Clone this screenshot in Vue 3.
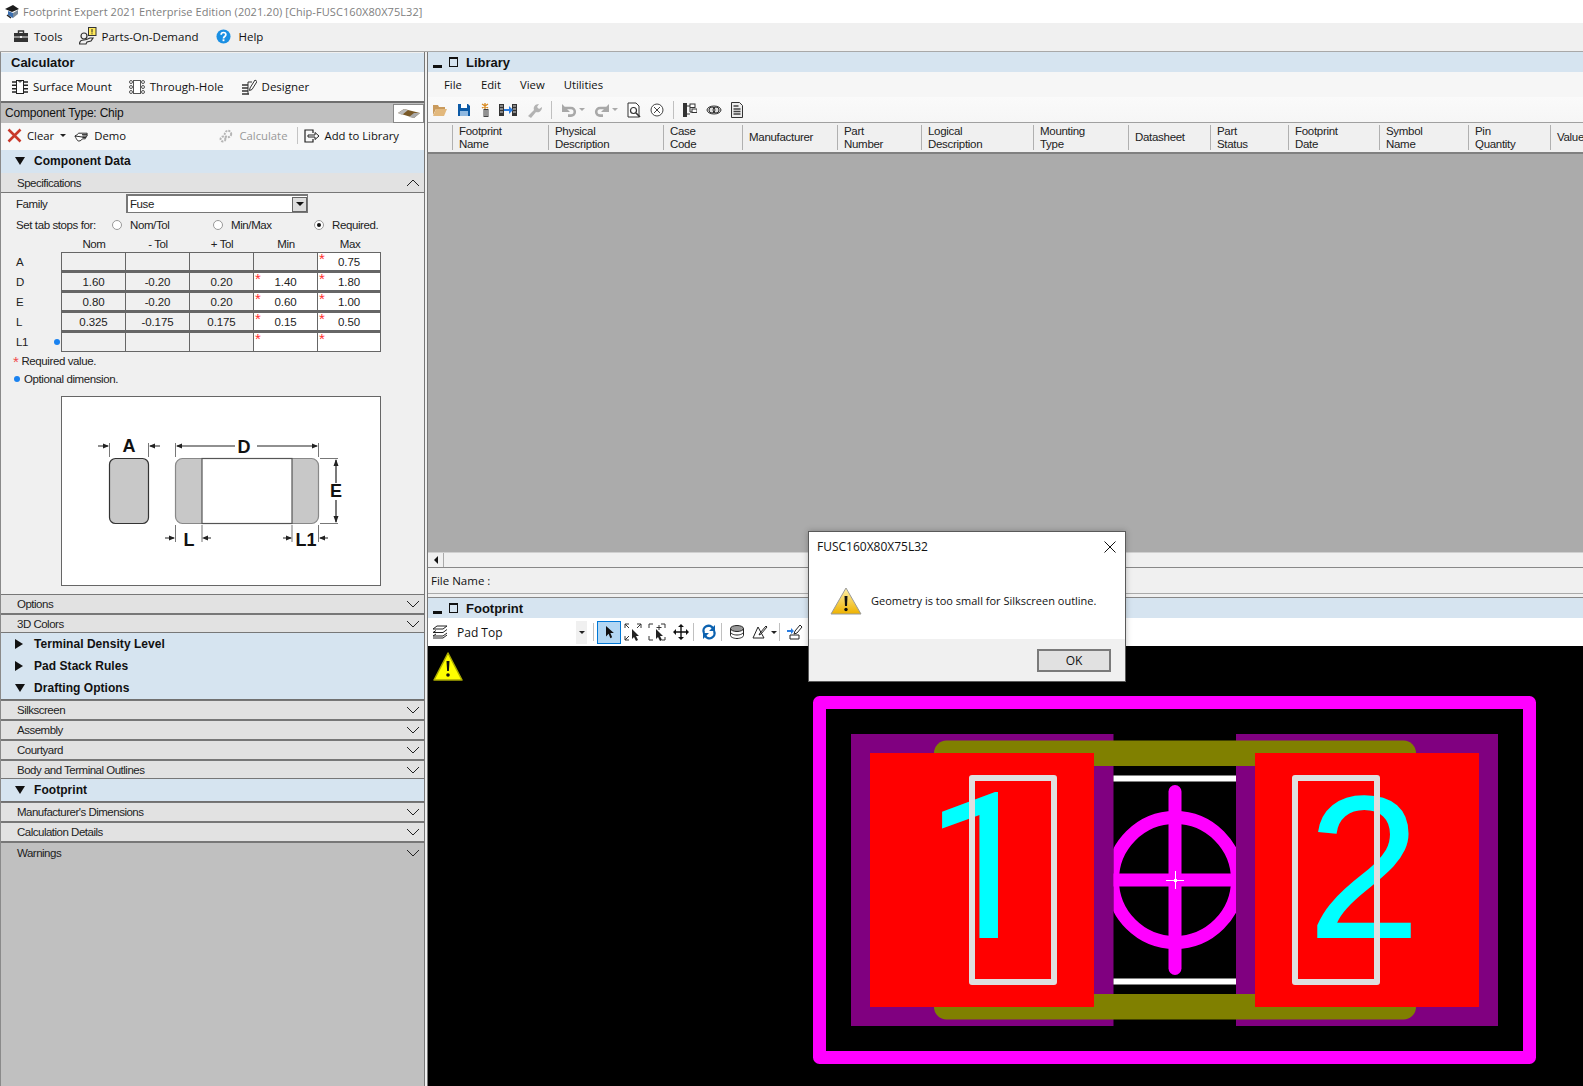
<script setup>
const menu = [
  { icon: 'tools', label: 'Tools' },
  { icon: 'pod', label: 'Parts-On-Demand' },
  { icon: 'help', label: 'Help' }
]
const dims = [
  { n: 'A', cells: ['', '', '', '', '0.75'], req: [false, true] },
  { n: 'D', cells: ['1.60', '-0.20', '0.20', '1.40', '1.80'], req: [true, true] },
  { n: 'E', cells: ['0.80', '-0.20', '0.20', '0.60', '1.00'], req: [true, true] },
  { n: 'L', cells: ['0.325', '-0.175', '0.175', '0.15', '0.50'], req: [true, true] },
  { n: 'L1', cells: ['', '', '', '', ''], req: [true, true], opt: true }
]
const heads = ['Nom', '- Tol', '+ Tol', 'Min', 'Max']
const cols = [
  { t: ['Footprint', 'Name'], w: 96 },
  { t: ['Physical', 'Description'], w: 115 },
  { t: ['Case', 'Code'], w: 79 },
  { t: ['Manufacturer'], w: 95 },
  { t: ['Part', 'Number'], w: 84 },
  { t: ['Logical', 'Description'], w: 112 },
  { t: ['Mounting', 'Type'], w: 95 },
  { t: ['Datasheet'], w: 82 },
  { t: ['Part', 'Status'], w: 78 },
  { t: ['Footprint', 'Date'], w: 91 },
  { t: ['Symbol', 'Name'], w: 89 },
  { t: ['Pin', 'Quantity'], w: 82 },
  { t: ['Value'], w: 33 }
]
</script>

<template>
  <div class="app">
    <header class="title">
      <svg class="logo" viewBox="0 0 18 16" width="18" height="16"><path d="M1 5 L9 1 L15 5 L8 8Z" fill="#1c1c1c"/><path d="M4 7 L9 9 L9 14 L4 11Z" fill="#3b6fb0"/><path d="M9 9 L14 6 L14 10 L9 14Z" fill="#7a8a9a"/><path d="M3 11 L7 14" stroke="#222" stroke-width="1.5"/></svg>
      <span>Footprint Expert 2021 Enterprise Edition (2021.20) [Chip-FUSC160X80X75L32]</span>
    </header>
    <nav class="menubar">
      <div v-for="m in menu" :key="m.label" class="menuitem">
        <svg v-if="m.icon === 'tools'" viewBox="0 0 14 12" width="14" height="12"><path d="M0 3h14v9H0z" fill="#333"/><path d="M4.500 3V1h5v2" fill="none" stroke="#333" stroke-width="1.400"/><path d="M0 7h14" stroke="#f0f0f0"/><path d="M6 6h2v2H6z" fill="#f0f0f0"/></svg>
        <svg v-else-if="m.icon === 'pod'" viewBox="0 0 18 18" width="18" height="18"><rect x="9.500" y=".5" width="7.500" height="8" fill="#ffe95c" stroke="#333"/><path d="M13 2v3.500M13 6.300v1" stroke="#222"/><circle cx="5" cy="9" r="3" fill="none" stroke="#333" stroke-width="1.200"/><path d="M.5 17c0-3 2-4 4.500-4 2 0 4-1 6-2l3 0-2 3-4 1-1 2z" fill="none" stroke="#333" stroke-width="1.200"/></svg>
        <svg v-else viewBox="0 0 16 16" width="15" height="15"><circle cx="8" cy="8" r="7.500" fill="#1a8fe3"/><path d="M5.500 6c0-3 5-3 5 0 0 2-2.500 2-2.500 4" fill="none" stroke="#fff" stroke-width="1.800"/><rect x="7" y="11" width="2" height="2" fill="#fff"/></svg>
        <span>{{ m.label }}</span>
      </div>
    </nav>

    <main class="workspace">
      <aside class="side">
        <div class="calc-head">Calculator</div>
        <div class="modes">
          <div class="mode">
            <svg viewBox="0 0 16 16" width="16" height="16"><rect x="4.500" y="1.500" width="7" height="13" fill="#fff" stroke="#222"/><path d="M0 3h4M0 6.300h4M0 9.700h4M0 13h4M12 3h4M12 6.300h4M12 9.700h4M12 13h4" stroke="#222" stroke-width="1.500"/><path d="M6.500 1.500a1.500 1.500 0 0 0 3 0" fill="none" stroke="#222"/></svg>
            <span>Surface Mount</span>
          </div>
          <div class="mode">
            <svg viewBox="0 0 16 16" width="16" height="16"><rect x="4.500" y="1.500" width="7" height="13" fill="#fff" stroke="#555"/><g fill="none" stroke="#555"><circle cx="2" cy="3" r="1.500"/><circle cx="2" cy="8" r="1.500"/><circle cx="2" cy="13" r="1.500"/><circle cx="14" cy="3" r="1.500"/><circle cx="14" cy="8" r="1.500"/><circle cx="14" cy="13" r="1.500"/></g></svg>
            <span>Through-Hole</span>
          </div>
          <div class="mode">
            <svg viewBox="0 0 16 16" width="16" height="16"><path d="M1 6h6M1 9h6M1 12h6M1 15h7" stroke="#333" stroke-width="1.300"/><path d="M7 3h4M7 3v12" stroke="#333" fill="none"/><path d="M9 9l5-8 2 1.500-5 8-2.500 1z" fill="#fff" stroke="#333"/></svg>
            <span>Designer</span>
          </div>
        </div>
        <div class="ctype">
          <span>Component Type: Chip</span>
          <div class="chip-btn">
            <svg viewBox="0 0 24 12" width="24" height="12"><path d="M1 6l6-4 16 4-6 5z" fill="#7a5a28"/><path d="M1 6l6-4 4 1-6 5z" fill="#bbb"/><path d="M17 6l6 0-6 5-5-1z" fill="#aaa"/></svg>
          </div>
        </div>
        <div class="actions">
          <div class="act">
            <svg viewBox="0 0 15 15" width="15" height="15"><path d="M1.500 1.500l12 12M13.500 1.500l-12 12" stroke="#c9392b" stroke-width="2.600"/></svg>
            <span>Clear</span><i class="caret"></i>
          </div>
          <div class="act demo">
            <svg viewBox="0 0 16 14" width="15" height="14"><path d="M1 7c2-1 3-2 4-3l9 0v1.500H8.500M14 5.500v1.500H9M13 7v1.500H9M12 8.500V10H9c-1 2-4 3-5 2-1-1-2-3-3-5z" fill="#fff" stroke="#222"/></svg>
            <span>Demo</span>
          </div>
          <div class="act calc">
            <svg viewBox="0 0 14 14" width="14" height="14"><circle cx="9" cy="5" r="3.200" fill="none" stroke="#b5b5b5" stroke-width="2" stroke-dasharray="2 1"/><circle cx="4" cy="10" r="2.400" fill="none" stroke="#b5b5b5" stroke-width="2" stroke-dasharray="2 1"/></svg>
            <span>Calculate</span>
          </div>
          <div class="act add">
            <svg viewBox="0 0 16 14" width="16" height="14"><path d="M9 4V1H1v12h8v-3" fill="none" stroke="#222" stroke-width="1.200"/><path d="M4 6h7V3.500L15 7l-4 3.500V8H4z" fill="#fff" stroke="#222"/></svg>
            <span>Add to Library</span>
          </div>
        </div>
        <div class="blue-row big"><i class="tri tri-d"></i><b>Component Data</b></div>
        <div class="sec open">
          <span>Specifications</span>
          <svg class="chev" viewBox="0 0 14 8" width="14" height="8"><path d="M1 7l6-6 6 6" fill="none" stroke="#222"/></svg>
        </div>
        <section class="spec">
          <div class="family">
            <label>Family</label>
            <div class="combo"><span>Fuse</span><div class="combo-btn"><i class="tri tri-d small"></i></div></div>
          </div>
          <div class="stops">
            <span class="stops-lbl">Set tab stops for:</span>
            <span class="radio-w r1"><i class="radio"></i>Nom/Tol</span>
            <span class="radio-w r2"><i class="radio"></i>Min/Max</span>
            <span class="radio-w"><i class="radio on"></i>Required.</span>
          </div>
          <div class="grid-heads">
            <span v-for="h in heads" :key="h">{{ h }}</span>
          </div>
          <div class="dims">
            <div v-for="d in dims" :key="d.n" class="dim-row">
              <span class="dim-name">{{ d.n }}<i v-if="d.opt" class="dot"></i></span>
              <div v-for="(c, i) in d.cells" :key="i" class="cell" :class="{ ro: i < 3 || (i === 3 && !d.req[0]) }">
                <em v-if="i === 3 && d.req[0]">*</em>
                <em v-if="i === 4 && d.req[1]">*</em>
                {{ c }}
              </div>
            </div>
          </div>
          <div class="legend"><em>*</em>Required value.</div>
          <div class="legend second"><i class="dot"></i>Optional dimension.</div>
          <div class="diagram">
            <svg viewBox="0 0 318 188" width="318" height="188">
              <rect x="47.500" y="61.500" width="39" height="65" rx="6" fill="#c8c8c8" stroke="#333" stroke-width="1.200"/>
              <rect x="113.500" y="61.500" width="143" height="65" rx="7" fill="#c8c8c8" stroke="#888" stroke-width="1.200"/>
              <rect x="140" y="61.500" width="90" height="65" fill="#fff" stroke="#555" stroke-width="1.200"/>
              <g stroke="#777" fill="none">
                <path d="M47.500 46v14M86.500 46v14M113.500 46v14M256.500 46v14M258 61.500h18M258 126.500h18M113.500 128v17M140 128v17M230 128v17M256.500 128v17"/>
              </g>
              <g stroke="#222" stroke-width="1.200" fill="#222">
                <path d="M36 49h10M88 49h10M115 49h58M195 49h60M274 63v23M274 103v22M103 141h9M142 141h7M221 141h8M258 141h8"/>
              </g>
              <g fill="#222">
                <path d="M47 49l-6-2.500v5zM87 49l6-2.500v5zM114 49l6-2.500v5zM256 49l-6-2.500v5zM274 62l-2.500 7h5zM274 126l-2.500-7h5zM113 141l-6-2.500v5zM140 141l6-2.500v5zM230 141l-6-2.500v5zM257 141l6-2.500v5z"/>
              </g>
              <text x="67" y="55" class="dlabel">A</text>
              <text x="182" y="56" class="dlabel">D</text>
              <text x="274" y="100" class="dlabel">E</text>
              <text x="127" y="149" class="dlabel">L</text>
              <text x="244" y="149" class="dlabel">L1</text>
            </svg>
          </div>
        </section>
        <div class="sec">Options<svg class="chev" viewBox="0 0 14 8" width="14" height="8"><path d="M1 1l6 6 6-6" fill="none" stroke="#222"/></svg></div>
        <div class="sec short">3D Colors<svg class="chev" viewBox="0 0 14 8" width="14" height="8"><path d="M1 1l6 6 6-6" fill="none" stroke="#222"/></svg></div>
        <div class="blue-group">
          <div class="blue-row"><i class="tri tri-r"></i><b>Terminal Density Level</b></div>
          <div class="blue-row"><i class="tri tri-r"></i><b>Pad Stack Rules</b></div>
          <div class="blue-row"><i class="tri tri-d"></i><b>Drafting Options</b></div>
        </div>
        <div class="sec">Silkscreen<svg class="chev" viewBox="0 0 14 8" width="14" height="8"><path d="M1 1l6 6 6-6" fill="none" stroke="#222"/></svg></div>
        <div class="sec">Assembly<svg class="chev" viewBox="0 0 14 8" width="14" height="8"><path d="M1 1l6 6 6-6" fill="none" stroke="#222"/></svg></div>
        <div class="sec">Courtyard<svg class="chev" viewBox="0 0 14 8" width="14" height="8"><path d="M1 1l6 6 6-6" fill="none" stroke="#222"/></svg></div>
        <div class="sec short">Body and Terminal Outlines<svg class="chev" viewBox="0 0 14 8" width="14" height="8"><path d="M1 1l6 6 6-6" fill="none" stroke="#222"/></svg></div>
        <div class="blue-group"><div class="blue-row"><i class="tri tri-d"></i><b>Footprint</b></div></div>
        <div class="sec">Manufacturer's Dimensions<svg class="chev" viewBox="0 0 14 8" width="14" height="8"><path d="M1 1l6 6 6-6" fill="none" stroke="#222"/></svg></div>
        <div class="sec">Calculation Details<svg class="chev" viewBox="0 0 14 8" width="14" height="8"><path d="M1 1l6 6 6-6" fill="none" stroke="#222"/></svg></div>
        <div class="sec warn">Warnings<svg class="chev" viewBox="0 0 14 8" width="14" height="8"><path d="M1 1l6 6 6-6" fill="none" stroke="#222"/></svg></div>
        <div class="side-fill"></div>
      </aside>

      <div class="main">
        <div class="panel-head"><i class="minus"></i><i class="win"></i><b>Library</b></div>
        <div class="lib-menu"><span>File</span><span>Edit</span><span>View</span><span>Utilities</span></div>
        <div class="lib-tools">
          <svg viewBox="0 0 16 14" width="16" height="14"><path d="M1 2h5l1 2h6v2H4L1 12z" fill="#c99a5c"/><path d="M4 6h11l-3 7H1z" fill="#e2b87c"/></svg>
          <svg viewBox="0 0 14 14" width="14" height="14"><path d="M1 1h10l2 2v10H1z" fill="#0c5aa6"/><rect x="4" y="1" width="6" height="4" fill="#fff"/><rect x="3" y="8" width="8" height="5" fill="#8fb8e0"/></svg>
          <svg viewBox="0 0 10 14" width="10" height="14"><path d="M5 0v6M2 1l6 4M8 1L2 5" stroke="#d9881c" stroke-width="1.300"/><rect x="3.500" y="6" width="5" height="8" fill="#444"/><path d="M4 8h4M4 10h4M4 12h4" stroke="#ddd"/></svg>
          <svg viewBox="0 0 18 14" width="18" height="14"><rect x="0" y="1" width="5" height="12" fill="#333"/><rect x="13" y="1" width="5" height="12" fill="#333"/><path d="M1 3h3M1 6h3M1 9h3M14 3h3M14 6h3M14 9h3" stroke="#ddd"/><path d="M5 6h5V3l4 4-4 4V8H5z" fill="#2a7de1"/></svg>
          <svg viewBox="0 0 16 16" width="16" height="16"><path d="M2 14l6-6c-1-3 1-6 5-6l-2 3 2 2 3-2c0 4-3 6-6 5l-5 6z" fill="#b3b3b3"/></svg>
          <span class="sep"></span>
          <span class="drop">
            <svg viewBox="0 0 16 16" width="16" height="16"><path d="M4 6h6a3.800 3.800 0 0 1 0 7.600H7" fill="none" stroke="#a8a8a8" stroke-width="2.600"/><path d="M1 2v8h8z" fill="#a8a8a8"/></svg><i class="caret grey"></i>
          </span>
          <span class="drop">
            <svg viewBox="0 0 16 16" width="16" height="16"><path d="M12 6H6a3.800 3.800 0 0 0 0 7.600h3" fill="none" stroke="#a8a8a8" stroke-width="2.600"/><path d="M15 2v8H7z" fill="#a8a8a8"/></svg><i class="caret grey"></i>
          </span>
          <svg viewBox="0 0 14 16" width="14" height="16"><path d="M1 1h8l3 3v11H1z" fill="#fff" stroke="#333"/><circle cx="6.500" cy="8.500" r="3" fill="none" stroke="#333" stroke-width="1.200"/><path d="M9 11l4 4" stroke="#333" stroke-width="1.600"/></svg>
          <svg viewBox="0 0 14 14" width="14" height="14"><circle cx="7" cy="7" r="6" fill="#fff" stroke="#444"/><path d="M4 4l6 6M10 4l-6 6" stroke="#444"/></svg>
          <span class="sep"></span>
          <svg viewBox="0 0 14 14" width="14" height="14"><rect x="0" y="0" width="4" height="14" fill="#333"/><path d="M4 3h3M4 11h3M7 5v4h3" stroke="#333" fill="none"/><rect x="7" y="1" width="5" height="3.500" fill="#fff" stroke="#333"/><rect x="9" y="6" width="5" height="3.500" fill="#fff" stroke="#333"/></svg>
          <svg viewBox="0 0 16 10" width="16" height="10"><ellipse cx="8" cy="5" rx="7" ry="4" fill="#ddd" stroke="#333"/><circle cx="6" cy="5" r="3" fill="none" stroke="#333"/><circle cx="10" cy="5" r="3" fill="none" stroke="#333"/></svg>
          <svg viewBox="0 0 12 16" width="12" height="16"><path d="M.5.500h8l3 3v12H.500z" fill="#eee" stroke="#333"/><path d="M2.500 4h5M2.500 7h7M2.500 9.500h7M2.500 12h7" stroke="#444" stroke-width="1.300"/></svg>
        </div>
        <div class="lib-head">
          <div class="rowhead"></div>
          <div v-for="c in cols" :key="c.t[0] + c.w" class="lib-col" :style="{ width: c.w + 'px' }">
            <span v-for="t in c.t" :key="t">{{ t }}</span>
          </div>
        </div>
        <div class="lib-body"></div>
        <div class="hscroll"><div class="sb-btn"><i class="tri tri-l"></i></div></div>
        <div class="filename">File Name :</div>
        <div class="panel-head fp-head"><i class="minus"></i><i class="win"></i><b>Footprint</b></div>
        <div class="fp-tools">
          <svg class="layers" viewBox="0 0 16 14" width="16" height="14"><path d="M1 4l4-3h10l-4 3zM1 7.500l3-2M1 11l3-2M1 7.500h10l4-3M1 11h10l4-3M1 13h10l4-3" fill="none" stroke="#222"/></svg>
          <div class="layer-combo"><span>Pad Top</span><div class="lc-btn"><i class="caret"></i></div></div>
          <span class="sep"></span>
          <div class="tool on"><svg viewBox="0 0 12 16" width="11" height="14"><path d="M2 1v12l3-3 2 5 2-1-2-5h4z" fill="#111"/></svg></div>
          <div class="tool"><svg viewBox="0 0 18 18" width="18" height="18"><path d="M1 5V1h4M13 1h4v4M1 13v4h4" fill="none" stroke="#333"/><path d="M1 1l4 4M17 1l-4 4M1 17l4-4" stroke="#333"/><path d="M8 6v10l2-2 2 4 2-1-2-4h3z" fill="#222"/></svg></div>
          <div class="tool"><svg viewBox="0 0 18 18" width="18" height="18"><path d="M5 1H1v4M13 1h4v4M1 13v4h4M14 17h3v-3" fill="none" stroke="#333"/><path d="M11 2v5M8.500 4.500h5" stroke="#333"/><path d="M8 6v10l2-2 2 4 2-1-2-4h3z" fill="#222"/></svg></div>
          <div class="tool"><svg viewBox="0 0 16 16" width="16" height="16"><path d="M8 1v14M1 8h14" stroke="#111" stroke-width="1.400"/><path d="M8 0l-3 3h6zM8 16l-3-3h6zM0 8l3-3v6zM16 8l-3-3v6z" fill="#111"/></svg></div>
          <span class="sep"></span>
          <div class="tool"><svg viewBox="0 0 16 16" width="16" height="16"><path d="M3 9A5 5 0 0 1 12 4.500M13 7a5 5 0 0 1-9 4.500" fill="none" stroke="#0c62b0" stroke-width="2.400"/><path d="M14 1v6H8zM2 15V9h6z" fill="#0c62b0"/></svg></div>
          <span class="sep"></span>
          <div class="tool"><svg viewBox="0 0 16 14" width="16" height="14"><ellipse cx="8" cy="3.500" rx="6.500" ry="3" fill="#999" stroke="#222"/><path d="M1.500 3.500v7c0 1.500 3 3 6.500 3s6.500-1.500 6.500-3v-7M1.500 7c0 1.500 3 3 6.500 3s6.500-1.500 6.500-3" fill="none" stroke="#222"/></svg></div>
          <div class="tool wide"><svg viewBox="0 0 16 14" width="16" height="14"><path d="M1 13L6 2l6 11zM8 8l6-7 1 1-6 7-2 1z" fill="#fff" stroke="#222"/></svg><i class="caret"></i></div>
          <span class="sep"></span>
          <div class="tool"><svg viewBox="0 0 16 16" width="16" height="16"><path d="M0 6h4V4l3 3-3 3V8H0z" fill="#2a7de1"/><path d="M8 7l5-6 2 2-5 6-3 1zM3 11h9v4H3z" fill="#fff" stroke="#222"/></svg></div>
        </div>
        <div class="canvas">
          <svg class="warn-mark" viewBox="0 0 30 30" width="30" height="30"><path d="M15 2L29 29H1z" fill="#ffff00" stroke="#a9a900" stroke-width="1.500" stroke-linejoin="round"/><path d="M13.500 10h3l-.6 10h-1.800z" fill="#111"/><circle cx="15" cy="24" r="1.800" fill="#111"/></svg>
          <svg class="board" viewBox="428 645 1155 441" width="1155" height="441">
            <rect x="851" y="733" width="262.500" height="292" fill="#800080"/>
            <rect x="1236" y="733" width="262" height="292" fill="#800080"/>
            <clipPath id="mid"><rect x="1113.500" y="690" width="122.500" height="380"/></clipPath>
            <g clip-path="url(#mid)">
              <circle cx="1175" cy="879" r="62.500" fill="none" stroke="#ff00ff" stroke-width="13"/>
            </g>
            <rect x="1113.500" y="872.500" width="122.500" height="13" fill="#ff00ff"/>
            <rect x="1168.500" y="784" width="13" height="190" rx="6.500" fill="#ff00ff"/>
            <rect x="1113.500" y="774.500" width="122.500" height="6" fill="#fff"/>
            <rect x="1113.500" y="977.500" width="122.500" height="6" fill="#fff"/>
            <path d="M934 765v-13a12.500 12.500 0 0 1 12.500-12.500h457a12.500 12.500 0 0 1 12.500 12.500v13z" fill="#808000"/>
            <path d="M934 993v13a12.500 12.500 0 0 0 12.500 12.500h457a12.500 12.500 0 0 0 12.500-12.500v-13z" fill="#808000"/>
            <rect x="870" y="752" width="224" height="254" fill="#ff0000"/>
            <rect x="1255" y="752" width="224" height="254" fill="#ff0000"/>
            <rect x="819.500" y="701.500" width="710" height="355" fill="none" stroke="#ff00ff" stroke-width="13" stroke-linejoin="round"/>
            <text x="925" y="937" class="pin one">1</text>
            <text x="1307" y="937" class="pin two">2</text>
            <rect x="972" y="777" width="82" height="204" fill="none" stroke="#dfdfdf" stroke-width="6" stroke-linejoin="round"/>
            <rect x="1295" y="777" width="82" height="204" fill="none" stroke="#dfdfdf" stroke-width="6" stroke-linejoin="round"/>
            <path d="M1166 879.500h18M1175.500 870v18" stroke="#fff"/>
            <rect x="1174" y="878" width="3" height="3" fill="#fff"/>
          </svg>
        </div>
      </div>
    </main>

    <div class="dialog">
      <div class="dlg-title">
        <span>FUSC160X80X75L32</span>
        <svg viewBox="0 0 12 12" width="12" height="12"><path d="M.5.500l11 11M11.500.500l-11 11" stroke="#111" stroke-width="1"/></svg>
      </div>
      <div class="dlg-body">
        <svg viewBox="0 0 32 28" width="32" height="28"><defs><linearGradient id="w" x1="0" y1="0" x2="0" y2="1"><stop offset="0" stop-color="#fff0a8"/><stop offset="1" stop-color="#eeb200"/></linearGradient></defs><path d="M16 1L31 27H1z" fill="url(#w)" stroke="#9a9a9a" stroke-linejoin="round"/><path d="M14.500 9h3l-.5 10h-2z" fill="#111"/><circle cx="16" cy="22.500" r="1.700" fill="#111"/></svg>
        <span>Geometry is too small for Silkscreen outline.</span>
      </div>
      <div class="dlg-foot"><button class="ok">OK</button></div>
    </div>
  </div>
</template>

<style>
html, body { margin: 0; padding: 0; background: #f0f0f0; overflow: hidden; }
</style>

<style scoped>
.app { width: 1583px; height: 1086px; position: relative; overflow: hidden; display: flex; flex-direction: column; font-family: "Liberation Sans", Arial, sans-serif; font-size: 12px; color: #111; background: #f0f0f0; }
.title { height: 23px; flex: none; background: #fff; display: flex; align-items: center; gap: 1px; padding-left: 4px; font-family: "Open Sans", sans-serif; font-size: 11px; letter-spacing: .07px; color: #808080; white-space: nowrap; }
.logo { flex: none; }
.menubar { height: 28px; flex: none; box-sizing: border-box; padding: 0 0 2px 14px; display: flex; align-items: center; background: #f0f0f0; font-family: "Open Sans", sans-serif; font-size: 11.500px; color: #111; }
.menuitem { display: flex; align-items: center; gap: 6px; margin-right: 16px; }
.menuitem:nth-child(2) { gap: 5px; margin-right: 18px; }
.menuitem:nth-child(3) { gap: 7px; }

.workspace { flex: 1; min-height: 0; display: flex; border-top: 1px solid #a8a8a8; }
.side { width: 425px; flex: none; box-sizing: border-box; display: flex; flex-direction: column; border-left: 1px solid #8a8a8a; border-right: 1px solid #777; background: #f0f0f0; }
.calc-head { height: 19px; margin-top: 1px; background: #d6e4f0; font-weight: bold; font-size: 13px; line-height: 19px; padding-left: 10px; color: #111; flex: none; }
.modes { height: 29px; flex: none; display: flex; align-items: center; background: #f8f8f8; padding-left: 11px; font-family: "Open Sans", sans-serif; font-size: 11.500px; }
.mode { display: flex; align-items: center; gap: 5px; margin-right: 17px; }
.ctype { height: 22px; flex: none; background: #c0c0c0; border-top: 2px solid #6e6e6e; display: flex; align-items: center; justify-content: space-between; padding-left: 4px; box-sizing: border-box; letter-spacing: -.2px; }
.chip-btn { width: 31px; height: 19px; background: #fff; border: 1px solid #888; box-sizing: border-box; display: flex; align-items: center; justify-content: center; }
.actions { height: 27px; flex: none; box-sizing: border-box; padding: 0 0 2px 6px; display: flex; align-items: center; background: #f8f8f8; font-family: "Open Sans", sans-serif; font-size: 11.300px; }
.act { display: flex; align-items: center; gap: 5px; }
.act.demo { margin-left: 8px; }
.act.calc { margin-left: auto; color: #999; gap: 6px; }
.act.add { margin-left: 9px; margin-right: 25px; padding-left: 6px; border-left: 1px solid #c4c4c4; height: 17px; }
.caret { display: inline-block; width: 0; height: 0; border-left: 3px solid transparent; border-right: 3px solid transparent; border-top: 3px solid #222; }
.caret.grey { border-top-color: #aaa; margin-left: 2px; }
.act .caret { margin-left: 1px; }
.tri { display: inline-block; width: 0; height: 0; flex: none; }
.tri-d { border-left: 5px solid transparent; border-right: 5px solid transparent; border-top: 8px solid #111; }
.tri-d.small { border-left-width: 4px; border-right-width: 4px; border-top-width: 4px; }
.tri-r { border-top: 5px solid transparent; border-bottom: 5px solid transparent; border-left: 8px solid #111; }
.tri-l { border-top: 4px solid transparent; border-bottom: 4px solid transparent; border-right: 4px solid #111; }
.blue-row { display: flex; align-items: center; height: 22px; flex: none; box-sizing: border-box; background: #d6e4f0; padding-left: 14px; gap: 9px; font-size: 12px; }
.blue-row b { color: #111; letter-spacing: .05px; }
.blue-row:has(.tri-r) { gap: 11px; }
.blue-row.big { height: 23px; padding-bottom: 2px; }
.blue-group { flex: none; background: #d6e4f0; border-bottom: 1px solid #707070; }
.sec { height: 20px; flex: none; box-sizing: border-box; display: flex; align-items: center; justify-content: space-between; padding: 0 3px 0 16px; background: #e2e2e2; border-top: 1px solid #777; border-bottom: 1px solid #777; font-size: 11.500px; letter-spacing: -.5px; color: #222; }
.sec.short { height: 19px; }
.sec.open { border-top: 0; }
.sec.warn { background: #c0c0c0; border-bottom: 0; }
.chev { margin-right: 1px; flex: none; }
.side-fill { flex: 1; background: #c0c0c0; }

.spec { height: 401px; flex: none; box-sizing: border-box; background: #f0f0f0; padding-left: 15px; font-size: 11.500px; letter-spacing: -.4px; color: #222; }
.family { display: flex; align-items: center; height: 21px; }
.family label { width: 110px; }
.combo { width: 182px; height: 19px; background: #fff; border: 1px solid #777; border-width: 2px 1px 1px 2px; box-sizing: border-box; display: flex; align-items: center; justify-content: space-between; padding-left: 2px; }
.combo-btn { width: 15px; height: 15px; background: #ddd; border: 1px solid #666; box-sizing: border-box; display: flex; align-items: center; justify-content: center; }
.stops { display: flex; align-items: center; height: 21px; }
.stops-lbl { width: 96px; }
.radio-w { display: inline-flex; align-items: center; gap: 8px; }
.r1, .r2 { width: 101px; }
.radio { width: 10px; height: 10px; border-radius: 50%; border: 1px solid #999; background: #fff; box-sizing: border-box; position: relative; display: inline-block; }
.radio.on::after { content: ""; position: absolute; left: 2px; top: 2px; width: 4px; height: 4px; border-radius: 50%; background: #111; }
.grid-heads { display: flex; padding-left: 46px; height: 17px; align-items: center; }
.grid-heads span { width: 64px; text-align: center; }
.dims { display: flex; flex-direction: column; }
.dim-row { display: flex; height: 20px; }
.dim-name { width: 45px; line-height: 20px; position: relative; }
.dim-name .dot { position: absolute; left: 38px; top: 7px; }
.dot { display: inline-block; width: 6px; height: 6px; border-radius: 50%; background: #1a82f0; }
.cell { width: 64px; height: 20px; box-sizing: border-box; border: 1px solid #666; border-bottom-width: 2px; border-right-width: 0; background: #fff; text-align: center; line-height: 18px; position: relative; color: #222; letter-spacing: -.1px; }
.cell:last-child { border-right-width: 1px; }
.dim-row:last-child .cell { border-bottom-width: 1px; }
.cell.ro { background: #f0f0f0; }
.cell em { position: absolute; left: 1px; top: -1px; color: #ff3030; font-style: normal; font-size: 15px; line-height: 14px; }
.legend { height: 18px; line-height: 18px; margin-left: -3px; }
.legend em { color: #f04848; font-style: normal; font-size: 15px; margin-right: 3px; vertical-align: -2px; }
.legend .dot { margin: 0 4px 1px 1px; }
.diagram { margin: 8px 0 0 45px; width: 320px; height: 190px; box-sizing: border-box; background: #fff; border: 1px solid #666; }
.diagram svg { display: block; }
.dlabel { font-family: "Liberation Sans", sans-serif; font-weight: bold; font-size: 18px; text-anchor: middle; fill: #111; letter-spacing: 0; }

.main { flex: 1; min-width: 0; display: flex; flex-direction: column; margin-left: 2px; border-left: 1px solid #777; }
.panel-head { height: 20px; flex: none; background: #d6e4f0; display: flex; align-items: center; padding-left: 5px; font-size: 13px; }
.panel-head b { margin-left: 7px; }
.minus { width: 9px; height: 3px; background: #111; align-self: flex-end; margin-bottom: 4px; margin-right: 7px; }
.win { width: 7px; height: 7px; border: 1px solid #111; border-top-width: 2px; margin-right: 1px; }
.lib-menu { height: 25px; flex: none; background: #f6f6f6; display: flex; align-items: center; padding-left: 16px; gap: 19px; font-family: "Open Sans", sans-serif; font-size: 11.300px; }
.lib-tools { height: 26px; flex: none; box-sizing: border-box; display: flex; align-items: center; gap: 9px; padding-left: 4px; background: linear-gradient(#fafafa, #f6f6f6); border-bottom: 1px solid #a0a0a0; }
.sep { width: 1px; height: 18px; background: #c0c0c0; flex: none; }
.drop { display: inline-flex; align-items: center; }
.lib-head { height: 31px; flex: none; display: flex; background: #f0f0f0; border-bottom: 2px solid #808080; box-sizing: border-box; overflow: hidden; font-size: 11.500px; letter-spacing: -.3px; color: #222; }
.rowhead { width: 24px; flex: none; border-right: 1px solid #b0b0b0; margin: 2px 0; }
.lib-col { flex: none; box-sizing: border-box; padding-left: 6px; border-right: 1px solid #b0b0b0; margin: 2px 0; display: flex; flex-direction: column; justify-content: center; line-height: 13px; white-space: nowrap; }
.lib-col:last-child { border-right: 0; }
.lib-body { height: 398px; flex: none; background: #ababab; }
.hscroll { height: 14px; flex: none; display: flex; background: #f0f0f0; border-top: 1px solid #d0d0d0; border-bottom: 1px solid #888; }
.sb-btn { width: 15px; background: #f0f0f0; border-right: 1px solid #aaa; display: flex; align-items: center; justify-content: center; }
.filename { height: 25px; flex: none; line-height: 25px; padding-left: 3px; background: #f0f0f0; border-bottom: 1px solid #aaa; font-family: "Open Sans", sans-serif; font-size: 11.500px; }
.fp-head { margin-top: 3px; border-top: 1px solid #888; }
.fp-tools { height: 28px; flex: none; display: flex; align-items: center; background: #fff; padding-left: 4px; }
.layers { margin-right: 5px; }
.layer-combo { width: 134px; height: 23px; display: flex; align-items: center; justify-content: space-between; font-family: "Open Sans", sans-serif; padding-left: 4px; box-sizing: border-box; background: #fff; margin-right: 3px; }
.lc-btn { width: 11px; height: 23px; background: #f0f0f0; display: flex; align-items: center; justify-content: center; }
.fp-tools .sep { margin: 0 3px; }
.fp-tools .tool + .sep, .fp-tools .sep + .tool { margin-left: 0; }
.tool { width: 24px; height: 23px; box-sizing: border-box; display: flex; align-items: center; justify-content: center; gap: 3px; flex: none; }
.tool.on { background: #b3d7f3; border: 1px solid #0078d7; }
.tool.wide { width: 30px; }
.canvas { flex: 1; min-height: 0; background: #000; position: relative; overflow: hidden; }
.warn-mark { position: absolute; left: 5px; top: 5px; }
.board { position: absolute; left: 0; top: 0; }
.pin { fill: #00ffff; font-size: 205px; }
.pin.one { font-family: Roboto, sans-serif; }
.pin.two { font-family: "Liberation Sans", sans-serif; }

.dialog { position: absolute; left: 808px; top: 531px; width: 318px; height: 151px; box-sizing: border-box; background: #fff; border: 1px solid #5a5a5a; display: flex; flex-direction: column; font-family: "Open Sans", sans-serif; box-shadow: 0 0 6px rgba(0,0,0,.25); }
.dlg-title { height: 29px; flex: none; display: flex; align-items: center; justify-content: space-between; padding: 0 9px 0 8px; color: #111; }
.dlg-body { flex: 1; display: flex; align-items: center; gap: 9px; padding-left: 21px; padding-top: 1px; box-sizing: border-box; font-size: 11px; }
.dlg-foot { height: 42px; flex: none; background: #f0f0f0; display: flex; justify-content: flex-end; align-items: flex-start; padding: 10px 14px 0 0; box-sizing: border-box; }
.ok { width: 74px; height: 23px; background: #e1e1e1; border: 2px solid #7a7a7a; box-sizing: border-box; font-family: "Open Sans", sans-serif; font-size: 12px; color: #111; padding: 0; }
</style>
